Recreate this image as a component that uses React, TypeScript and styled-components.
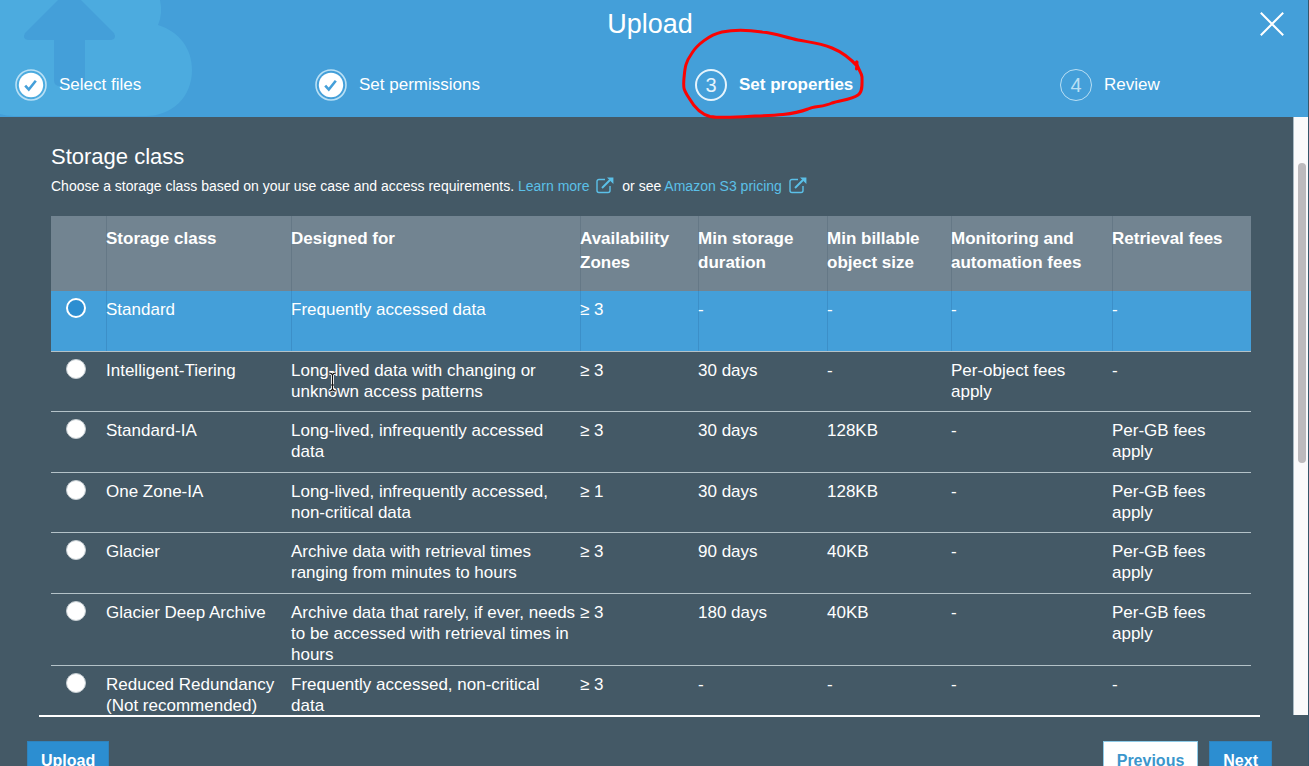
import React, { useState } from "react";
import styled, { createGlobalStyle, css } from "styled-components";

const color = {
  blue: "#449fd9",
  blueLight: "#4cabdf",
  button: "#2c8ed1",
  slate: "#445966",
  head: "#728491",
  link: "#5bc0e8",
  line: "#b4c2c8",
};

const GlobalStyle = createGlobalStyle`
  * { box-sizing: border-box; }
  html, body { margin: 0; height: 100%; overflow: hidden; }
  body {
    background: ${color.slate};
    color: #fff;
    font-family: "Liberation Sans", Arial, sans-serif;
    font-size: 17px;
  }
`;

const Dialog = styled.main`
  display: flex;
  flex-direction: column;
  height: calc(100vh + 39px);
  border-right: 1px solid #36566b;
`;

const Header = styled.header`
  position: relative;
  flex: none;
  background: ${color.blue};
  padding: 8px 0 16px;
`;

const BucketMark = styled.svg`
  position: absolute;
  left: 0;
  top: 0;
`;

const TitleBar = styled.div`
  position: relative;
  display: grid;
  grid-template-columns: 40px 1fr 40px;
  align-items: center;
  padding: 0 16px 0 8px;
`;

const Title = styled.h1`
  grid-column: 2;
  margin: 0;
  font-size: 27px;
  line-height: 32px;
  font-weight: 400;
  text-align: center;
`;

const CloseButton = styled.button`
  display: flex;
  justify-content: center;
  padding: 4px;
  border: 0;
  background: none;
  color: #fff;
`;

const Steps = styled.ol`
  position: relative;
  display: grid;
  grid-template-columns: 300fr 380fr 365fr 248fr;
  margin: 29px 0 0;
  padding: 0 0 0 15px;
  list-style: none;
`;

const Step = styled.li<{ $current?: boolean }>`
  position: relative;
  display: flex;
  align-items: center;
  gap: 12px;
  line-height: 32px;
  font-weight: ${(p) => (p.$current ? 700 : 400)};
`;

const StepNumber = styled.span<{ $current?: boolean }>`
  display: flex;
  align-items: center;
  justify-content: center;
  width: 32px;
  height: 32px;
  border-radius: 50%;
  border: ${(p) => (p.$current ? "2px solid #e6f4fc" : "1px solid #b9dff4")};
  color: ${(p) => (p.$current ? "#e6f4fc" : "#b9dff4")};
  font-size: 20px;
  font-weight: 400;
`;

const HandCircle = styled.svg`
  position: absolute;
  left: -15px;
  top: -43px;
  z-index: 2;
  pointer-events: none;
`;

const Body = styled.div`
  flex: 1;
  min-height: 0;
  display: flex;
`;

const Scroller = styled.section`
  flex: 1;
  min-width: 0;
  overflow: hidden;
  padding: 26px 42px 0 51px;
`;

const Track = styled.div`
  flex: none;
  width: 15px;
  padding: 46px 3px 0 4px;
  background: #fafafb;
  border-left: 1px solid #a9bac4;
`;

const Thumb = styled.div`
  width: 8px;
  height: 300px;
  border-radius: 4px;
  background: #bcbabd;
`;

const Heading = styled.h2`
  margin: 0;
  font-size: 22px;
  line-height: 28px;
  font-weight: 400;
`;

const Intro = styled.p`
  margin: 4px 0 18px;
  font-size: 14px;
  line-height: 23px;
`;

const Link = styled.a`
  color: ${color.link};
  text-decoration: none;
  svg {
    margin: 0 4px 0 3px;
    vertical-align: -3px;
  }
`;

const Table = styled.table`
  width: 100%;
  table-layout: fixed;
  border-collapse: separate;
  border-spacing: 0;
`;

const divider = css`
  & + & {
    box-shadow: inset 1px 0 0 rgba(40, 60, 80, 0.16);
  }
`;

const HeadCell = styled.th`
  height: 75px;
  padding: 11px 4px 0 0;
  background: ${color.head};
  line-height: 24px;
  font-weight: 700;
  text-align: left;
  vertical-align: top;
  ${divider}
`;

const Cell = styled.td`
  position: relative;
  padding: 8px 4px 0 0;
  border-bottom: 1px solid ${color.line};
  line-height: 21px;
  vertical-align: top;
`;

const RadioCell = styled(Cell)`
  padding: 7px 0 0 15px;
`;

const Row = styled.tr<{ $selected: boolean }>`
  height: 61px;
  &:nth-child(even) {
    height: 60px;
  }
  ${(p) =>
    p.$selected &&
    css`
      background: ${color.blue};
      td + td {
        box-shadow: inset 1px 0 0 rgba(20, 60, 110, 0.16);
      }
    `}
`;

const Radio = styled.input`
  display: block;
  appearance: none;
  width: 20px;
  height: 20px;
  margin: 0;
  border: 1px solid #c4ccd1;
  border-radius: 50%;
  background: #fff;
  &:checked {
    border: 2px solid #fff;
    background: ${color.button};
  }
`;

const Pointer = styled.svg`
  position: absolute;
  left: 37px;
  top: 19px;
`;

const Footer = styled.footer`
  flex: none;
  margin: 0 48px 0 39px;
  border-top: 2px solid #fff;
`;

const Actions = styled.div`
  display: flex;
  gap: 11px;
  margin: 0 -12px;
  padding: 24px 0;
`;

const Button = styled.button<{ $light?: boolean }>`
  height: 40px;
  padding: 0 13px;
  border: 1px solid ${(p) => (p.$light ? "#8ecbe8" : "#2f83bd")};
  background: ${(p) => (p.$light ? "#fff" : color.button)};
  color: ${(p) => (p.$light ? "#3b96cc" : "#fff")};
  font: 700 16px "Liberation Sans", Arial, sans-serif;
  &:first-child {
    margin-right: auto;
  }
`;

const CheckMark = () => (
  <svg width="32" height="32" viewBox="0 0 32 32" fill="none" aria-hidden="true">
    <circle cx="16" cy="16" r="15" stroke="#b9e0f5" strokeWidth="1.6" />
    <circle cx="16" cy="16" r="12.2" fill="#fff" />
    <path d="M10.2 16.6l3.6 4 7-8.8" stroke="#449fd9" strokeWidth="2.6" />
  </svg>
);

const ExternalIcon = () => (
  <svg width="18" height="17" viewBox="0 0 18 17" fill="none" aria-hidden="true">
    <path
      d="M9 2.5H3a2 2 0 0 0-2 2v9a2 2 0 0 0 2 2h9a2 2 0 0 0 2-2V9"
      stroke={color.link}
      strokeWidth="1.4"
    />
    <path d="M6 11l8-8" stroke={color.link} strokeWidth="2" />
    <path d="M11 .6h6.4V7l-2-2-2.4-2.4z" fill={color.link} />
  </svg>
);

const columns = [55, 185, 289, 118, 129, 124, 161, 139];

const headings = [
  "Storage class",
  "Designed for",
  "Availability Zones",
  "Min storage duration",
  "Min billable object size",
  "Monitoring and automation fees",
  "Retrieval fees",
];

const classes = [
  ["Standard", "Frequently accessed data", "≥ 3", "-", "-", "-", "-"],
  ["Intelligent-Tiering", "Long-lived data with changing or unknown access patterns", "≥ 3", "30 days", "-", "Per-object fees apply", "-"],
  ["Standard-IA", "Long-lived, infrequently accessed data", "≥ 3", "30 days", "128KB", "-", "Per-GB fees apply"],
  ["One Zone-IA", "Long-lived, infrequently accessed, non-critical data", "≥ 1", "30 days", "128KB", "-", "Per-GB fees apply"],
  ["Glacier", "Archive data with retrieval times ranging from minutes to hours", "≥ 3", "90 days", "40KB", "-", "Per-GB fees apply"],
  ["Glacier Deep Archive", "Archive data that rarely, if ever, needs to be accessed with retrieval times in hours", "≥ 3", "180 days", "40KB", "-", "Per-GB fees apply"],
  ["Reduced Redundancy (Not recommended)", "Frequently accessed, non-critical data", "≥ 3", "-", "-", "-", "-"],
];

export default function App() {
  const [selected, setSelected] = useState(0);

  return (
    <>
      <GlobalStyle />
      <Dialog>
        <Header>
          <BucketMark width="200" height="117" viewBox="0 0 200 117" aria-hidden="true">
            <path
              d="M0 0H160Q163 14 158 25C180 32 192 49 192 70C192 97 172 116 146 116H14Q6 116 0 114Z"
              fill={color.blueLight}
            />
            <path
              d="M58 0H81L114 33Q117 39 111 40H85V80Q85 86 79 86H60Q54 86 54 80V40H28Q22 39 25 33Z"
              fill={color.blue}
            />
          </BucketMark>
          <TitleBar>
            <Title>Upload</Title>
            <CloseButton type="button" aria-label="Close">
              <svg width="24" height="24" viewBox="0 0 24 24" stroke="#fff" strokeWidth="2">
                <path d="M.8.8l22.4 22.4M23.2.8L.8 23.2" />
              </svg>
            </CloseButton>
          </TitleBar>
          <Steps>
            <Step>
              <CheckMark />
              Select files
            </Step>
            <Step>
              <CheckMark />
              Set permissions
            </Step>
            <Step $current aria-current="step">
              <StepNumber $current>3</StepNumber>
              Set properties
              <HandCircle width="190" height="94" viewBox="680 26 190 94" fill="none" aria-hidden="true">
                <path
                  d="M857 62L856.500 69M858 67C850 58 842 52 832 48C820 43 808 42 798 40C784 37 775 33 762 32C748 30 735 29.500 722 32C709 35 697 45 692 53C685 63 685 68 684 78C683 89 684 90 689 98C693 105 700 114 710 116.500C722 118.500 740 117 755 116C775 115.500 792 115 808 109C814 106 824 107 832 103C840 100 851 100 858 95C863 92 862 83 862 77C861.500 72 857 68 856.500 62"
                  stroke="#fb0303"
                  strokeWidth="3"
                  strokeLinecap="round"
                  strokeLinejoin="round"
                />
              </HandCircle>
            </Step>
            <Step>
              <StepNumber>4</StepNumber>
              Review
            </Step>
          </Steps>
        </Header>

        <Body>
          <Scroller>
            <Heading>Storage class</Heading>
            <Intro>
              Choose a storage class based on your use case and access requirements.{" "}
              <Link href="#learn">
                Learn more <ExternalIcon />
              </Link>{" "}
              or see{" "}
              <Link href="#pricing">
                Amazon S3 pricing <ExternalIcon />
              </Link>
            </Intro>
            <Table>
              <colgroup>
                {columns.map((width, i) => (
                  <col key={i} width={width} />
                ))}
              </colgroup>
              <thead>
                <tr>
                  <HeadCell aria-label="Selection" />
                  {headings.map((h) => (
                    <HeadCell key={h} scope="col">
                      {h}
                    </HeadCell>
                  ))}
                </tr>
              </thead>
              <tbody>
                {classes.map(([name, ...values], i) => (
                  <Row key={name} $selected={i === selected}>
                    <RadioCell>
                      <Radio
                        type="radio"
                        name="storage-class"
                        id={`class-${i}`}
                        checked={i === selected}
                        onChange={() => setSelected(i)}
                      />
                    </RadioCell>
                    <Cell>
                      <label htmlFor={`class-${i}`}>{name}</label>
                    </Cell>
                    {values.map((value, j) => (
                      <Cell key={j}>
                        {value}
                        {i === 1 && j === 0 && (
                          <Pointer width="9" height="22" viewBox="0 0 9 22" fill="none" aria-hidden="true">
                            <path d="M1 2Q4 2 4.500 4Q5 2 8 2M4.500 4V18M1 20Q4 20 4.500 18Q5 20 8 20M3 14H6" stroke="#fff" strokeWidth="3" />
                            <path d="M1 2Q4 2 4.500 4Q5 2 8 2M4.500 4V18M1 20Q4 20 4.500 18Q5 20 8 20M3 14H6" stroke="#111" strokeWidth="1.200" />
                          </Pointer>
                        )}
                      </Cell>
                    ))}
                  </Row>
                ))}
              </tbody>
            </Table>
          </Scroller>
          <Track aria-hidden="true">
            <Thumb />
          </Track>
        </Body>

        <Footer>
          <Actions>
            <Button type="button">Upload</Button>
            <Button type="button" $light>
              Previous
            </Button>
            <Button type="button">Next</Button>
          </Actions>
        </Footer>
      </Dialog>
    </>
  );
}
